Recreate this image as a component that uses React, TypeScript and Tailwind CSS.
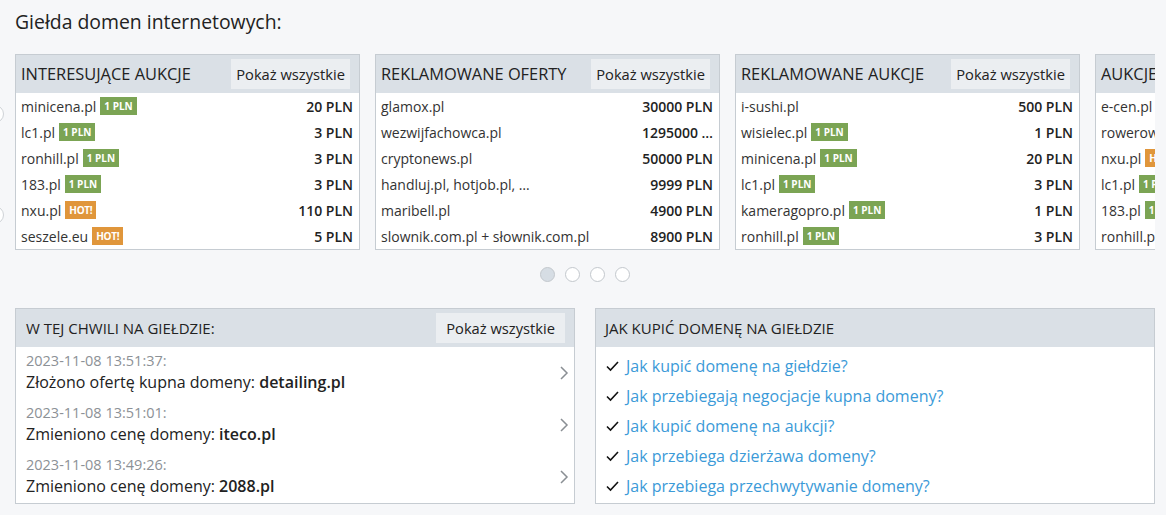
import React from "react";

type Badge = "pln" | "hot" | null;
type Row = { name: string; badge: Badge; price: string };
type Card = { title: string; rows: Row[] };

const cards: Card[] = [
  {
    title: "INTERESUJĄCE AUKCJE",
    rows: [
      { name: "minicena.pl", badge: "pln", price: "20 PLN" },
      { name: "lc1.pl", badge: "pln", price: "3 PLN" },
      { name: "ronhill.pl", badge: "pln", price: "3 PLN" },
      { name: "183.pl", badge: "pln", price: "3 PLN" },
      { name: "nxu.pl", badge: "hot", price: "110 PLN" },
      { name: "seszele.eu", badge: "hot", price: "5 PLN" },
    ],
  },
  {
    title: "REKLAMOWANE OFERTY",
    rows: [
      { name: "glamox.pl", badge: null, price: "30000 PLN" },
      { name: "wezwijfachowca.pl", badge: null, price: "1295000 …" },
      { name: "cryptonews.pl", badge: null, price: "50000 PLN" },
      { name: "handluj.pl, hotjob.pl, …", badge: null, price: "9999 PLN" },
      { name: "maribell.pl", badge: null, price: "4900 PLN" },
      { name: "slownik.com.pl + słownik.com.pl", badge: null, price: "8900 PLN" },
    ],
  },
  {
    title: "REKLAMOWANE AUKCJE",
    rows: [
      { name: "i-sushi.pl", badge: null, price: "500 PLN" },
      { name: "wisielec.pl", badge: "pln", price: "1 PLN" },
      { name: "minicena.pl", badge: "pln", price: "20 PLN" },
      { name: "lc1.pl", badge: "pln", price: "3 PLN" },
      { name: "kameragopro.pl", badge: "pln", price: "1 PLN" },
      { name: "ronhill.pl", badge: "pln", price: "3 PLN" },
    ],
  },
  {
    title: "AUKCJE Z OSTATNIEJ CHWILI",
    rows: [
      { name: "e-cen.pl", badge: null, price: "10 PLN" },
      { name: "rowerowy.pl", badge: null, price: "10 PLN" },
      { name: "nxu.pl", badge: "hot", price: "110 PLN" },
      { name: "lc1.pl", badge: "pln", price: "3 PLN" },
      { name: "183.pl", badge: "pln", price: "3 PLN" },
      { name: "ronhill.pl", badge: null, price: "3 PLN" },
    ],
  },
];

function BadgeEl({ b }: { b: Badge }) {
  if (!b) return null;
  if (b === "pln")
    return (
      <span className="ml-[4px] inline-flex h-[18px] items-center bg-[#7ba454] px-[4px] text-[10px] font-bold leading-none text-white">
        1 PLN
      </span>
    );
  return (
    <span className="ml-[4px] inline-flex h-[18px] items-center bg-[#e0963b] px-[4px] text-[10px] font-bold leading-none tracking-[-0.3px] text-white">
      HOT!
    </span>
  );
}

function CardEl({ card }: { card: Card }) {
  return (
    <div className="w-[345px] shrink-0 border border-[#c6ccd2] bg-white">
      <div className="flex h-[38px] items-center justify-between bg-[#dae0e6] pl-[5px] pr-[9px]">
        <span className="whitespace-nowrap text-[16.4px] text-[#222]">{card.title}</span>
        <span className="flex h-[30px] items-center whitespace-nowrap bg-[#ebeef1] px-[5px] text-[14.7px] text-[#222]">
          Pokaż wszystkie
        </span>
      </div>
      <div>
        {card.rows.map((r, i) => (
          <div key={i} className="flex h-[26px] items-center justify-between pl-[5px] pr-[6px] text-[14px]">
            <span className="flex items-center whitespace-nowrap text-[#333]">
              {r.name}
              <BadgeEl b={r.badge} />
            </span>
            <span className="whitespace-nowrap font-semibold text-[#222]">{r.price}</span>
          </div>
        ))}
      </div>
    </div>
  );
}

function Chevron() {
  return (
    <svg width="10" height="14" viewBox="0 0 10 14" className="shrink-0">
      <polyline points="2,1 8,7 2,13" fill="none" stroke="#8a8f94" strokeWidth="1.5" />
    </svg>
  );
}

function Check() {
  return (
    <svg width="13" height="12" viewBox="0 0 13 12" className="mr-[7px] shrink-0">
      <polyline points="1,6.5 4.5,10 12,2" fill="none" stroke="#111" strokeWidth="1.6" />
    </svg>
  );
}

const events = [
  { ts: "2023-11-08 13:51:37:", text: "Złożono ofertę kupna domeny: ", domain: "detailing.pl" },
  { ts: "2023-11-08 13:51:01:", text: "Zmieniono cenę domeny: ", domain: "iteco.pl" },
  { ts: "2023-11-08 13:49:26:", text: "Zmieniono cenę domeny: ", domain: "2088.pl" },
];

const links = [
  "Jak kupić domenę na giełdzie?",
  "Jak przebiegają negocjacje kupna domeny?",
  "Jak kupić domenę na aukcji?",
  "Jak przebiega dzierżawa domeny?",
  "Jak przebiega przechwytywanie domeny?",
];

export default function App() {
  return (
    <div
      className="relative h-[515px] w-[1166px] overflow-hidden bg-[#f6f7f9] text-[#222]"
      style={{ fontFamily: '"Open Sans", "Noto Sans", sans-serif' }}
    >
      {/* hidden carousel arrows peeking at left edge */}
      <div className="absolute left-[-14px] top-[105px] h-[18px] w-[18px] rounded-full border border-[#cfd3d7] bg-white" />
      <div className="absolute left-[-14px] top-[206px] h-[18px] w-[18px] rounded-full border border-[#cfd3d7] bg-white" />

      <div className="ml-[15px] w-[1140px]">
        <h1 className="pt-[8px] text-[19.4px] leading-[28px] text-[#222]">Giełda domen internetowych:</h1>

        <div className="mt-[18px] flex gap-[15px] overflow-hidden">
          {cards.map((c, i) => (
            <CardEl key={i} card={c} />
          ))}
        </div>

        <div className="mt-[17px] flex justify-center gap-[10px]">
          <span className="h-[15px] w-[15px] rounded-full border border-[#c3c8cd] bg-[#d6dde4]" />
          <span className="h-[15px] w-[15px] rounded-full border border-[#c3c8cd] bg-white" />
          <span className="h-[15px] w-[15px] rounded-full border border-[#c3c8cd] bg-white" />
          <span className="h-[15px] w-[15px] rounded-full border border-[#c3c8cd] bg-white" />
        </div>

        <div className="mt-[26px] flex gap-[20px]">
          <div className="w-[560px] border border-[#c6ccd2] bg-white">
            <div className="flex h-[38px] items-center justify-between bg-[#dae0e6] pl-[10px] pr-[9px]">
              <span className="text-[15px] text-[#222]">W TEJ CHWILI NA GIEŁDZIE:</span>
              <span className="flex h-[30px] items-center bg-[#ebeef1] px-[10px] text-[14.7px] text-[#222]">
                Pokaż wszystkie
              </span>
            </div>
            <div>
              {events.map((e, i) => (
                <div key={i} className="flex h-[52px] items-center justify-between pl-[10px] pr-[5px]">
                  <div className="pb-[2px]">
                    <div className="text-[14.5px] leading-[20px] text-[#8c9196]">{e.ts}</div>
                    <div className="text-[16px] leading-[22px] text-[#222]">
                      {e.text}
                      <span className="font-semibold">{e.domain}</span>
                    </div>
                  </div>
                  <Chevron />
                </div>
              ))}
            </div>
          </div>

          <div className="w-[560px] border border-[#c6ccd2] bg-white">
            <div className="flex h-[38px] items-center bg-[#dae0e6] pl-[9px]">
              <span className="text-[15px] text-[#222]">JAK KUPIĆ DOMENĘ NA GIEŁDZIE</span>
            </div>
            <div className="pb-[2px] pt-[4px]">
              {links.map((l, i) => (
                <div key={i} className="flex h-[30px] items-center pl-[10px]">
                  <Check />
                  <span className="text-[16px] text-[#3b9ad8]">{l}</span>
                </div>
              ))}
            </div>
          </div>
        </div>
      </div>
    </div>
  );
}
